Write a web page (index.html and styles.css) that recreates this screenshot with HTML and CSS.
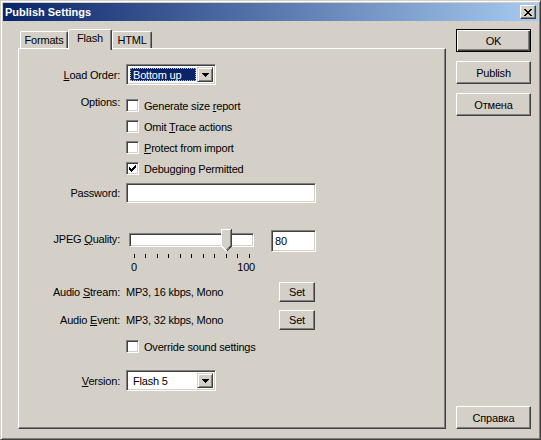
FILE: index.html
```html
<!DOCTYPE html>
<html>
<head>
<meta charset="utf-8">
<link rel="stylesheet" href="styles.css">
</head>
<body>
<div class="window">
  <div class="titlebar">
    <span class="title">Publish Settings</span>
    <span class="close"><svg width="8" height="7" viewBox="0 0 8 7" shape-rendering="crispEdges"><path d="M0 0h2v1H0z M6 0h2v1H6z M1 1h2v1H1z M5 1h2v1H5z M2 2h4v1H2z M3 3h2v1H3z M2 4h4v1H2z M1 5h2v1H1z M5 5h2v1H5z M0 6h2v1H0z M6 6h2v1H6z" fill="#000"/></svg></span>
  </div>
  <div class="client">
    <div class="tabctl">
      <div class="tabs">
        <div class="tab">Formats</div>
        <div class="tab sel">Flash</div>
        <div class="tab">HTML</div>
      </div>
      <div class="pane">
        <div class="row r-load">
          <span class="lbl"><u>L</u>oad Order:</span>
          <div class="combo">
            <span class="combo-text selected">Bottom up</span>
            <span class="combo-btn"><svg width="7" height="4" viewBox="0 0 7 4" shape-rendering="crispEdges"><path d="M0 0h7v1H0z M1 1h5v1H1z M2 2h3v1H2z M3 3h1v1H3z" fill="#000"/></svg></span>
          </div>
        </div>
        <div class="row r-options">
          <span class="lbl lbl-opt">Options:</span>
          <div class="checks">
            <label class="chk"><span class="box"></span><span class="txt">Generate size <u>r</u>eport</span></label>
            <label class="chk"><span class="box"></span><span class="txt">Omit <u>T</u>race actions</span></label>
            <label class="chk"><span class="box"></span><span class="txt"><u>P</u>rotect from import</span></label>
            <label class="chk"><span class="box"><svg width="7" height="7" viewBox="0 0 7 7" shape-rendering="crispEdges"><path d="M6 0h1v1h-1z M5 1h2v1h-2z M0 2h1v1H0z M4 2h3v1H4z M0 3h2v1H0z M3 3h3v1H3z M0 4h5v1H0z M1 5h3v1H1z M2 6h1v1H2z" fill="#000"/></svg></span><span class="txt">Debugging Permitted</span></label>
          </div>
        </div>
        <div class="row r-pass">
          <span class="lbl">Password:</span>
          <span class="field pass"></span>
        </div>
        <div class="row r-jpeg">
          <span class="lbl lbl-jpeg">JPEG <u>Q</u>uality:</span>
          <div class="slider">
            <div class="track-area">
              <span class="track"></span>
              <svg class="thumb" width="11" height="23" viewBox="0 0 11 23" shape-rendering="crispEdges">
                <path d="M0 0H11V17L5.5 22.5L0 17Z" fill="#D4D0C8"/>
                <path d="M0.5 17V0.5H10" fill="none" stroke="#fff"/>
                <path d="M10.5 0V17L5.5 22.2" fill="none" stroke="#404040"/>
                <path d="M9.5 1V16.6L5.5 21" fill="none" stroke="#808080"/>
                <path d="M0.5 17L5.5 22" fill="none" stroke="#fff"/>
              </svg>
            </div>
            <svg class="ticks" width="130" height="4" viewBox="0 0 130 4" shape-rendering="crispEdges" fill="#000">
              <rect x="8" y="0" width="1" height="4"/>
              <rect x="19" y="0" width="1" height="4"/>
              <rect x="31" y="0" width="1" height="4"/>
              <rect x="42" y="0" width="1" height="4"/>
              <rect x="54" y="0" width="1" height="4"/>
              <rect x="65" y="0" width="1" height="4"/>
              <rect x="77" y="0" width="1" height="4"/>
              <rect x="88" y="0" width="1" height="4"/>
              <rect x="100" y="0" width="1" height="4"/>
              <rect x="111" y="0" width="1" height="4"/>
              <rect x="123" y="0" width="1" height="4"/>
            </svg>
            <div class="scale"><span>0</span><span>100</span></div>
          </div>
          <span class="field quality">80</span>
        </div>
        <div class="row r-stream">
          <span class="lbl">Audio <u>S</u>tream:</span>
          <span class="value">MP3, 16 kbps, Mono</span>
          <button class="btn set">Set</button>
        </div>
        <div class="row r-event">
          <span class="lbl">Audio <u>E</u>vent:</span>
          <span class="value">MP3, 32 kbps, Mono</span>
          <button class="btn set">Set</button>
        </div>
        <div class="row r-override">
          <span class="lbl"></span>
          <label class="chk"><span class="box"></span><span class="txt">Override sound settings</span></label>
        </div>
        <div class="row r-version">
          <span class="lbl"><u>V</u>ersion:</span>
          <div class="combo">
            <span class="combo-text">Flash 5</span>
            <span class="combo-btn"><svg width="7" height="4" viewBox="0 0 7 4" shape-rendering="crispEdges"><path d="M0 0h7v1H0z M1 1h5v1H1z M2 2h3v1H2z M3 3h1v1H3z" fill="#000"/></svg></span>
          </div>
        </div>
      </div>
    </div>
    <div class="btncol">
      <button class="btn big def">OK</button>
      <button class="btn big">Publish</button>
      <button class="btn big">Отмена</button>
      <button class="btn big help">Справка</button>
    </div>
  </div>
</div>
</body>
</html>
```

FILE: styles.css
```css
* { box-sizing: border-box; }
html, body { margin: 0; padding: 0; }
body {
  background: #D4D0C8;
  font-family: "Liberation Sans", Arial, sans-serif;
  font-size: 11px;
  letter-spacing: -0.2px;
  color: #000;
}
.window {
  width: 541px;
  height: 440px;
  background: #D4D0C8;
  border: 1px solid;
  border-color: #D4D0C8 #404040 #404040 #D4D0C8;
  box-shadow: inset 1px 1px #fff, inset -1px -1px #808080;
  padding: 2px;
  display: flex;
  flex-direction: column;
}
.titlebar {
  height: 18px;
  flex: none;
  background: linear-gradient(to right, #0A246A, #A6CAF0);
  display: flex;
  align-items: center;
  justify-content: space-between;
  padding-left: 2px;
}
.title {
  color: #fff;
  font-weight: bold;
  font-size: 11px;
  letter-spacing: 0;
}
.close {
  width: 16px;
  height: 14px;
  margin-right: 2px;
  background: #D4D0C8;
  border: 1px solid;
  border-color: #fff #404040 #404040 #fff;
  box-shadow: inset -1px -1px #808080;
  display: flex;
  align-items: center;
  justify-content: center;
}
.close svg { display: block; margin-left: -1px; }
.client {
  flex: 1;
  display: flex;
  padding: 8px 0 8px 15px;
}
.tabctl {
  width: 428px;
  display: flex;
  flex-direction: column;
}
.tabs {
  height: 19px;
  display: flex;
  padding-left: 2px;
  align-items: flex-end;
  position: relative;
  z-index: 2;
}
.tab {
  height: 17px;
  border: 1px solid;
  border-bottom: none;
  border-color: #fff #404040 transparent #fff;
  box-shadow: inset -1px 0 #808080;
  border-radius: 2px 2px 0 0;
  display: flex;
  align-items: center;
  justify-content: center;
  padding-bottom: 1px;
}
.tab:nth-child(1) { width: 48px; }
.tab:nth-child(2) { width: 44px; }
.tab:nth-child(3) { width: 40px; }
.tab.sel {
  height: 21px;
  margin-bottom: -2px;
  background: #D4D0C8;
  padding-bottom: 5px;
}
.pane {
  flex: 1;
  border: 1px solid;
  border-color: #fff #404040 #404040 #fff;
  box-shadow: inset -1px -1px #808080;
  display: flex;
  flex-direction: column;
}
.row {
  display: flex;
  align-items: center;
  flex: none;
}
.lbl {
  width: 101px;
  margin-right: 6px;
  text-align: right;
  flex: none;
}
.r-load { margin-top: 15px; height: 21px; }
.r-options { margin-top: 10px; align-items: flex-start; }
.lbl-opt { line-height: 15px; }
.checks { display: flex; flex-direction: column; }
.chk {
  height: 21px;
  display: flex;
  align-items: center;
}
.txt { white-space: pre; }
.box {
  width: 13px;
  height: 13px;
  background: #fff;
  border: 1px solid;
  border-color: #808080 #fff #fff #808080;
  box-shadow: inset 1px 1px #404040, inset -1px -1px #D4D0C8;
  margin-right: 5px;
  display: flex;
  align-items: center;
  justify-content: center;
  flex: none;
}
.box svg { display: block; }
.field {
  background: #fff;
  border: 1px solid;
  border-color: #808080 #fff #fff #808080;
  box-shadow: inset 1px 1px #404040, inset -1px -1px #D4D0C8;
  display: flex;
  align-items: center;
  padding-left: 3px;
}
.r-pass { margin-top: 4px; height: 20px; }
.pass { width: 190px; height: 20px; }
.combo {
  width: 90px;
  height: 21px;
  background: #fff;
  border: 1px solid;
  border-color: #808080 #fff #fff #808080;
  box-shadow: inset 1px 1px #404040, inset -1px -1px #D4D0C8;
  display: flex;
  padding: 2px;
}
.combo-text {
  flex: 1;
  display: flex;
  align-items: center;
  padding-left: 2px;
  margin: 1px;
  border: 1px solid transparent;
}
.combo-text.selected {
  background: #0A246A;
  color: #fff;
  border: 1px dotted #C8C080;
}
.combo-btn {
  width: 16px;
  flex: none;
  background: #D4D0C8;
  border: 1px solid;
  border-color: #D4D0C8 #404040 #404040 #D4D0C8;
  box-shadow: inset 1px 1px #fff, inset -1px -1px #808080;
  display: flex;
  align-items: center;
  justify-content: center;
}
.combo-btn svg { display: block; }
.r-jpeg { margin-top: 26px; align-items: flex-start; }
.lbl-jpeg { line-height: 20px; }
.slider {
  width: 130px;
  display: flex;
  flex-direction: column;
}
.track-area {
  height: 23px;
  position: relative;
  padding: 4px 0 0 3px;
}
.track {
  display: block;
  width: 125px;
  height: 14px;
  background: #fff;
  border: 1px solid;
  border-color: #808080 #fff #fff #808080;
  box-shadow: inset 1px 1px #404040, inset -1px -1px #D4D0C8;
}
.thumb {
  position: absolute;
  left: 95px;
  top: 0;
  display: block;
}
.ticks { display: block; margin-top: 2px; }
.scale {
  display: flex;
  justify-content: space-between;
  padding: 0 1px 0 5px;
  margin-top: 3px;
  line-height: 13px;
}
.quality {
  width: 45px;
  height: 22px;
  margin-left: 15px;
  margin-top: 1px;
}
.value { width: 153px; }
.r-stream { margin-top: 8px; height: 20px; }
.r-event { margin-top: 8px; height: 20px; }
.r-override { margin-top: 6px; height: 21px; }
.r-version { margin-top: 13px; height: 21px; }
.btn {
  font-family: inherit;
  font-size: 11px;
  letter-spacing: -0.2px;
  color: #000;
  background: #D4D0C8;
  border: 1px solid;
  border-color: #fff #404040 #404040 #fff;
  box-shadow: inset -1px -1px #808080;
  padding: 0;
  margin: 0;
}
.set { width: 36px; height: 20px; }
.btncol {
  margin-left: 10px;
  display: flex;
  flex-direction: column;
  gap: 9px;
}
.big { width: 75px; height: 23px; }
.def {
  border: 1px solid #000;
  box-shadow: inset 1px 1px #fff, inset -1px -1px #404040, inset -2px -2px #808080;
}
.help { margin-top: auto; }
```
